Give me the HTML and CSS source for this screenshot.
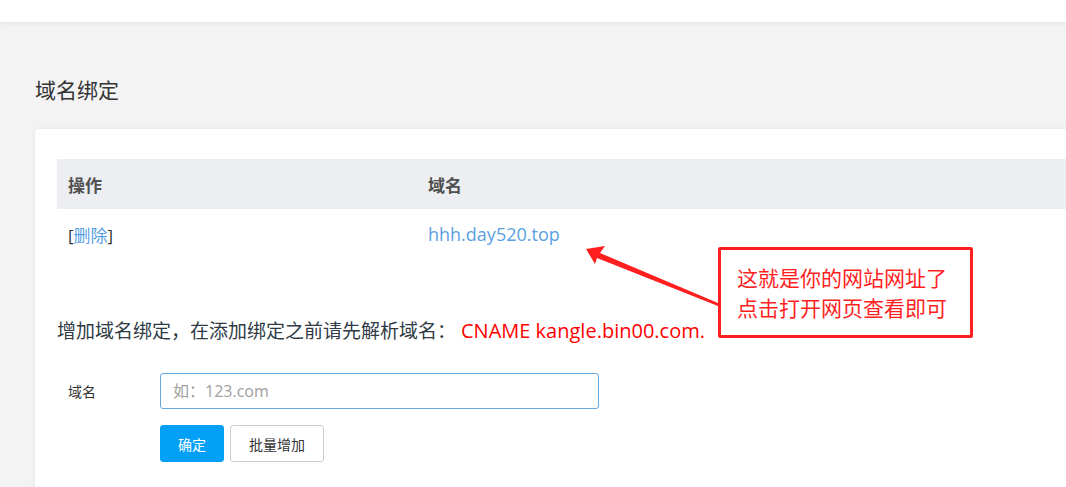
FILE: index.html
```html
<!DOCTYPE html>
<html lang="zh-CN">
  <head>
    <meta charset="UTF-8" />
    <meta name="viewport" content="width=device-width, initial-scale=1.0" />
    <title>域名绑定</title>
    <link rel="stylesheet" href="styles.css">
  </head>
  <body>
    <div class="top-bar"></div>
    <div class="main">
      <h2 class="page-title">域名绑定</h2>
      <div class="card">
        <table class="domain-table">
          <thead>
            <tr>
              <th class="col-op">操作</th>
              <th>域名</th>
            </tr>
          </thead>
          <tbody>
            <tr>
              <td class="col-op">[<a href="#">删除</a>]</td>
              <td><a href="#" class="domain-link">hhh.day520.top</a></td>
            </tr>
          </tbody>
        </table>

        <p class="add-tip">增加域名绑定，在添加绑定之前请先解析域名：<span class="cname">CNAME kangle.bin00.com.</span></p>

        <form class="add-form">
          <div class="form-row">
            <label for="domain">域名</label>
            <input type="text" id="domain" placeholder="如：123.com" />
          </div>
          <div class="form-row">
            <span class="spacer"></span>
            <button type="submit" class="btn btn-primary">确定</button>
            <button type="button" class="btn btn-default">批量增加</button>
          </div>
        </form>

        <!-- annotation -->
        <svg class="note-arrow" width="700" height="200" viewBox="0 0 700 200">
          <polygon points="551,120 570,117 565,124 683,174 683,177 562,129 560,135" fill="#ff1f1f" />
        </svg>
        <div class="note-box">
          这就是你的网站网址了<br />点击打开网页查看即可
        </div>
      </div>
    </div>
  </body>
</html>
```

FILE: styles.css
```css
/* page */
body {
  margin: 0;
  font-family: "Open Sans", "Noto Sans CJK SC", sans-serif;
  background: #f3f3f3;
  color: #333;
  overflow: hidden;
}

.top-bar {
  height: 22px;
  background: #fff;
  box-shadow: 0 1px 6px rgba(0, 0, 0, 0.08);
}

.main {
  width: 1060px;
  padding: 52px 0 0 35px;
}

.page-title {
  margin: 0 0 23px;
  font-size: 21px;
  font-weight: normal;
  line-height: 32px;
  color: #333;
}

.card {
  position: relative;
  background: #fff;
  border-radius: 4px;
  box-shadow: 0 0 8px rgba(0, 0, 0, 0.05);
  padding: 30px 0 26px 22px;
  height: 400px;
}

/* table */
.domain-table {
  width: 100%;
  border-collapse: collapse;
}

.domain-table th {
  background: #eceef1;
  height: 50px;
  padding: 0 11px;
  text-align: left;
  font-size: 17px;
  font-weight: bold;
  color: #505050;
}

.domain-table td {
  height: 50px;
  padding: 0 11px;
  font-size: 17px;
  color: #333;
}

.domain-table .col-op {
  width: 338px;
}

.domain-table a {
  color: #5a9fe3;
  text-decoration: none;
}

.domain-table .domain-link {
  font-size: 18px;
}

/* add tip */
.add-tip {
  margin: 58px 0 0;
  font-size: 19px;
  line-height: 28px;
  color: #2f3a45;
}

.add-tip .cname {
  margin-left: 5px;
  font-size: 20px;
  color: #f00;
}

/* form */
.add-form {
  margin-top: 28px;
}

.form-row {
  display: flex;
  align-items: center;
  margin-bottom: 16px;
}

.form-row label,
.form-row .spacer {
  width: 103px;
  padding-left: 11px;
  box-sizing: border-box;
  font-size: 14px;
  color: #333;
}

.form-row input {
  width: 439px;
  height: 36px;
  box-sizing: border-box;
  padding: 0 12px;
  border: 1px solid #66a8e0;
  border-radius: 3px;
  font-family: inherit;
  font-size: 16px;
  outline: none;
}

.form-row input::placeholder {
  color: #a0a0a0;
}

.btn {
  height: 37px;
  padding: 0 16px;
  border-radius: 3px;
  font-family: inherit;
  font-size: 14px;
  cursor: pointer;
  margin-right: 6px;
}

.btn-primary {
  width: 64px;
  background: #03a0f7;
  border: 1px solid #03a0f7;
  color: #fff;
}

.btn-default {
  width: 94px;
  background: #fff;
  border: 1px solid #ccc;
  color: #333;
}

/* annotation */
.note-arrow {
  position: absolute;
  left: 0;
  top: 0;
}

.note-box {
  position: absolute;
  left: 683px;
  top: 118px;
  height: 85px;
  width: 233px;
  padding: 0 0 0 16px;
  border: 3px solid #ff1f1f;
  border-radius: 2px;
  font-size: 21px;
  line-height: 30px;
  color: #ff1f1f;
  display: flex;
  align-items: center;
}
```
